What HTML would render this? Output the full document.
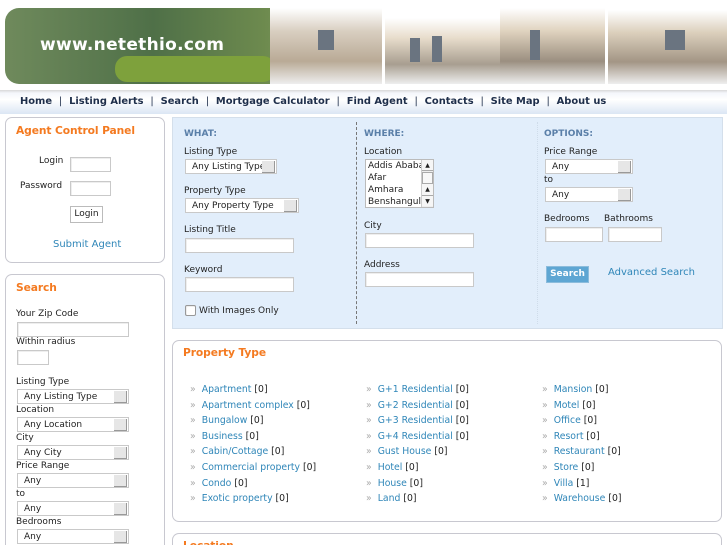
<!DOCTYPE html>
<html><head><meta charset="utf-8"><style>
*{margin:0;padding:0;box-sizing:border-box}
html,body{width:727px;height:545px;overflow:hidden}
body{background:#fff;font-family:"DejaVu Sans","Liberation Sans",sans-serif;font-size:9px;color:#222;position:relative}
.a{position:absolute;white-space:nowrap}
.panel{position:absolute;border:1px solid #c8c8d0;border-radius:7px;background:#fff}
.t{position:absolute;color:#f47a20;font-size:10.7px;font-weight:bold;letter-spacing:-0.1px}
.in{position:absolute;border:1px solid #c9c9c9;background:#fff;box-shadow:inset 1px 1px 0 #eee}
.sel{position:absolute;border:1px solid #c9c9c9;background:#fff;height:15px;font-size:9px;padding:2px 0 0 6px;line-height:10px}
.sel:after{content:"";position:absolute;right:1px;top:1px;width:12px;height:11px;background:#e6e6e6;border-right:1px solid #999;border-bottom:1px solid #999}
.h{position:absolute;color:#5a7fa8;font-weight:bold;font-size:9px}
.lnk{color:#2f86b8}
.li{position:absolute;font-size:9.3px;white-space:nowrap}
.li b{color:#aaa;font-weight:normal;margin-right:6px}
.w{position:absolute;background:#6a7480}
</style></head><body>
<div class="a" style="left:5px;top:8px;width:370px;height:76px;border-radius:14px;background:linear-gradient(90deg,#6f8a5c,#4f7048 40%,#6d8a4e 70%,#9bb07a);"></div>
<div class="a" style="left:115px;top:56px;width:160px;height:26px;border-radius:12px;background:#7ea13c"></div>
<div class="a" style="left:270px;top:8px;width:112px;height:76px;background:linear-gradient(180deg,#fff 0%,#d9cfc1 30%,#b9aa96 70%,#eee 100%)"></div>
<div class="a" style="left:385px;top:18px;width:115px;height:66px;background:linear-gradient(180deg,#fff 0%,#e8ddcc 30%,#a89e90 70%,#eee 100%)"></div>
<div class="a" style="left:500px;top:8px;width:105px;height:76px;background:linear-gradient(180deg,#fff 0%,#e0d3bf 30%,#9b8f80 70%,#eee 100%)"></div>
<div class="a" style="left:608px;top:10px;width:119px;height:74px;background:linear-gradient(180deg,#fff 0%,#dcd0bd 30%,#a39585 70%,#eee 100%)"></div>
<div class="w" style="left:318px;top:30px;width:16px;height:20px"></div>
<div class="w" style="left:410px;top:38px;width:10px;height:24px"></div>
<div class="w" style="left:432px;top:36px;width:10px;height:26px"></div>
<div class="w" style="left:530px;top:30px;width:10px;height:30px"></div>
<div class="w" style="left:665px;top:30px;width:20px;height:20px"></div>
<div class="a" style="left:40px;top:35px;color:#fff;font-size:17px;font-weight:bold;letter-spacing:0.3px">www.netethio.com</div>
<div class="a" style="left:0;top:90px;width:727px;height:24px;background:linear-gradient(180deg,#d8d8d8 0,#f4f6fb 3px,#fff 40%,#dbe6f4 100%)"></div>
<div class="a" style="left:20px;top:96px;font-size:9.9px;font-weight:bold;color:#1e2e4a">Home &nbsp;<span style="font-weight:normal">|</span>&nbsp; Listing Alerts &nbsp;<span style="font-weight:normal">|</span>&nbsp; Search &nbsp;<span style="font-weight:normal">|</span>&nbsp; Mortgage Calculator &nbsp;<span style="font-weight:normal">|</span>&nbsp; Find Agent &nbsp;<span style="font-weight:normal">|</span>&nbsp; Contacts &nbsp;<span style="font-weight:normal">|</span>&nbsp; Site Map &nbsp;<span style="font-weight:normal">|</span>&nbsp; About us</div>
<div class="panel" style="left:5px;top:117px;width:160px;height:146px"></div>
<div class="t" style="left:16px;top:124px">Agent Control Panel</div>
<div class="a" style="left:39px;top:156px">Login</div>
<div class="in" style="left:70px;top:157px;width:41px;height:15px"></div>
<div class="a" style="left:20px;top:181px">Password</div>
<div class="in" style="left:70px;top:181px;width:41px;height:15px"></div>
<div class="a" style="left:70px;top:206px;width:33px;height:17px;border:1px solid #bbb;background:#fff;text-align:center;line-height:15px">Login</div>
<div class="a lnk" style="left:53px;top:239px;font-size:10px">Submit Agent</div>
<div class="panel" style="left:5px;top:274px;width:160px;height:271px;border-bottom:none;border-radius:7px 7px 0 0"></div>
<div class="t" style="left:16px;top:281px">Search</div>
<div class="a" style="left:16px;top:309px">Your Zip Code</div>
<div class="in" style="left:17px;top:322px;width:112px;height:15px"></div>
<div class="a" style="left:16px;top:337px">Within radius</div>
<div class="in" style="left:17px;top:350px;width:32px;height:15px"></div>
<div class="a" style="left:16px;top:377px">Listing Type</div>
<div class="sel" style="left:17px;top:389px;width:112px">Any Listing Type</div>
<div class="a" style="left:16px;top:405px">Location</div>
<div class="sel" style="left:17px;top:417px;width:112px">Any Location</div>
<div class="a" style="left:16px;top:433px">City</div>
<div class="sel" style="left:17px;top:445px;width:112px">Any City</div>
<div class="a" style="left:16px;top:461px">Price Range</div>
<div class="sel" style="left:17px;top:473px;width:112px">Any</div>
<div class="a" style="left:16px;top:489px">to</div>
<div class="sel" style="left:17px;top:501px;width:112px">Any</div>
<div class="a" style="left:16px;top:517px">Bedrooms</div>
<div class="sel" style="left:17px;top:529px;width:112px">Any</div>
<div class="a" style="left:172px;top:117px;width:551px;height:212px;background:#e2eefb;border:1px solid #d4dfeb"></div>
<div class="a" style="left:356px;top:122px;height:202px;border-left:1px dashed #777"></div>
<div class="a" style="left:537px;top:122px;height:202px;border-left:1px dotted #cfdcea"></div>
<div class="h" style="left:184px;top:129px">WHAT:</div>
<div class="a" style="left:184px;top:147px">Listing Type</div>
<div class="sel" style="left:185px;top:159px;width:92px">Any Listing Type</div>
<div class="a" style="left:184px;top:186px">Property Type</div>
<div class="sel" style="left:185px;top:198px;width:114px">Any Property Type</div>
<div class="a" style="left:184px;top:225px">Listing Title</div>
<div class="in" style="left:185px;top:238px;width:109px;height:15px"></div>
<div class="a" style="left:184px;top:265px">Keyword</div>
<div class="in" style="left:185px;top:277px;width:109px;height:15px"></div>
<div class="in" style="left:185px;top:305px;width:11px;height:11px;border-radius:2px;border-color:#999"></div>
<div class="a" style="left:199px;top:306px">With Images Only</div>
<div class="h" style="left:364px;top:129px">WHERE:</div>
<div class="a" style="left:364px;top:147px">Location</div>
<div class="a" style="left:365px;top:159px;width:69px;height:49px;border:1px solid #bbb;background:#fff;line-height:12px;padding:0 0 0 2px;overflow:hidden">Addis Ababa<br>Afar<br>Amhara<br>Benshangul
<div class="a" style="right:0;top:0;width:12px;height:47px;background:#eee;border-left:1px solid #ccc"><div style="height:11px;border-bottom:1px solid #aaa;background:#f6f6f6;font-size:6px;text-align:center;line-height:11px">▲</div><div style="height:12px;margin-top:1px;border:1px solid #aaa;background:#f8f8f8"></div><div style="height:11px;background:#f6f6f6;font-size:6px;text-align:center;line-height:11px">▲</div><div style="height:11px;background:#f6f6f6;border-top:1px solid #aaa;font-size:6px;text-align:center;line-height:11px">▼</div></div></div>
<div class="a" style="left:364px;top:221px">City</div>
<div class="in" style="left:365px;top:233px;width:109px;height:15px"></div>
<div class="a" style="left:364px;top:260px">Address</div>
<div class="in" style="left:365px;top:272px;width:109px;height:15px"></div>
<div class="h" style="left:544px;top:129px">OPTIONS:</div>
<div class="a" style="left:544px;top:147px">Price Range</div>
<div class="sel" style="left:545px;top:159px;width:88px">Any</div>
<div class="a" style="left:544px;top:175px">to</div>
<div class="sel" style="left:545px;top:187px;width:88px">Any</div>
<div class="a" style="left:544px;top:214px">Bedrooms</div>
<div class="a" style="left:604px;top:214px">Bathrooms</div>
<div class="in" style="left:545px;top:227px;width:58px;height:15px"></div>
<div class="in" style="left:608px;top:227px;width:54px;height:15px"></div>
<div class="a" style="left:546px;top:266px;width:43px;height:17px;background:#5ea6d3;border:1px solid #8cbcdc;color:#fff;font-weight:bold;text-align:center;line-height:15px">Search</div>
<div class="a lnk" style="left:608px;top:267px;font-size:10px">Advanced Search</div>
<div class="panel" style="left:172px;top:340px;width:550px;height:182px"></div>
<div class="t" style="left:183px;top:346px">Property Type</div>
<div class="li" style="left:190px;top:382px;line-height:15.6px"><b>»</b><span class="lnk">Apartment</span> [0]<br><b>»</b><span class="lnk">Apartment complex</span> [0]<br><b>»</b><span class="lnk">Bungalow</span> [0]<br><b>»</b><span class="lnk">Business</span> [0]<br><b>»</b><span class="lnk">Cabin/Cottage</span> [0]<br><b>»</b><span class="lnk">Commercial property</span> [0]<br><b>»</b><span class="lnk">Condo</span> [0]<br><b>»</b><span class="lnk">Exotic property</span> [0]</div>
<div class="li" style="left:366px;top:382px;line-height:15.6px"><b>»</b><span class="lnk">G+1 Residential</span> [0]<br><b>»</b><span class="lnk">G+2 Residential</span> [0]<br><b>»</b><span class="lnk">G+3 Residential</span> [0]<br><b>»</b><span class="lnk">G+4 Residential</span> [0]<br><b>»</b><span class="lnk">Gust House</span> [0]<br><b>»</b><span class="lnk">Hotel</span> [0]<br><b>»</b><span class="lnk">House</span> [0]<br><b>»</b><span class="lnk">Land</span> [0]</div>
<div class="li" style="left:542px;top:382px;line-height:15.6px"><b>»</b><span class="lnk">Mansion</span> [0]<br><b>»</b><span class="lnk">Motel</span> [0]<br><b>»</b><span class="lnk">Office</span> [0]<br><b>»</b><span class="lnk">Resort</span> [0]<br><b>»</b><span class="lnk">Restaurant</span> [0]<br><b>»</b><span class="lnk">Store</span> [0]<br><b>»</b><span class="lnk">Villa</span> [1]<br><b>»</b><span class="lnk">Warehouse</span> [0]</div>
<div class="panel" style="left:172px;top:533px;width:550px;height:12px;border-bottom:none;border-radius:7px 7px 0 0;overflow:hidden"><div class="t" style="left:10px;top:5px">Location</div></div>
</body></html>
